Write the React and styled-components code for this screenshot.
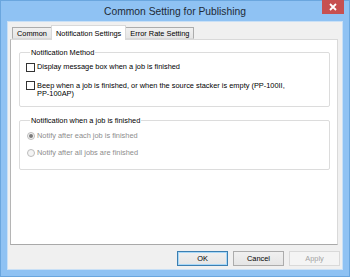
import styled, { createGlobalStyle } from "styled-components";

const Global = createGlobalStyle`
  html, body { margin: 0; padding: 0; }
  body { width: 350px; height: 277px; overflow: hidden; font-family: "Liberation Sans", Arial, sans-serif; }
`;

const Frame = styled.div`
  box-sizing: border-box;
  width: 350px;
  height: 277px;
  background: #8fc2f3;
  border: 1px solid #6aa6de;
  display: flex;
  flex-direction: column;
  padding: 0 6px 6px 6px;
`;

const TitleBar = styled.div`
  position: relative;
  height: 21px;
  display: flex;
  align-items: center;
  justify-content: center;
  font-size: 10.3px;
  color: #1e2a36;
`;

const Close = styled.div`
  position: absolute;
  right: -1px;
  top: -1px;
  width: 22px;
  height: 14px;
  background: #c75050;
  display: flex;
  align-items: center;
  justify-content: center;
`;

const Client = styled.div`
  flex: 1;
  background: #f0f0f0;
  border: 1px solid #c9e0f6;
  display: flex;
  flex-direction: column;
  padding: 3px 2px 3px 2px;
`;

const TabStrip = styled.div`
  display: flex;
  align-items: flex-end;
  height: 14px;
  padding-left: 2px;
  position: relative;
  z-index: 1;
`;

const Tab = styled.div`
  box-sizing: border-box;
  height: ${(p) => (p.$active ? "15px" : "12px")};
  margin-bottom: ${(p) => (p.$active ? "-1px" : "0")};
  margin-left: ${(p) => (p.$active ? "-1px" : "0")};
  margin-right: ${(p) => (p.$active ? "-1px" : "0")};
  padding: ${(p) => (p.$active ? "0 4px" : "0 4px")};
  border: 1px solid ${(p) => (p.$active ? "#d9d9d9" : "#acacac")};
  border-bottom: ${(p) => (p.$active ? "none" : "1px solid #d9d9d9")};
  background: ${(p) => (p.$active ? "#ffffff" : "linear-gradient(#f0f0f0, #e5e5e5)")};
  font-size: 7.4px;
  color: #000;
  display: flex;
  align-items: center;
  position: relative;
  z-index: ${(p) => (p.$active ? 2 : 1)};
`;

const Panel = styled.div`
  box-sizing: border-box;
  height: 206px;
  margin-right: 2px;
  background: #fff;
  border: 1px solid #d9d9d9;
  border-left-color: #b5b5b5;
  border-bottom-color: #a9a9a9;
  padding: 8px 7px 0 8px;
  display: flex;
  flex-direction: column;
  gap: 9px;
`;

const Group = styled.fieldset`
  margin: 0;
  border: 1px solid #dcdcdc;
  border-radius: 2px;
  padding: ${(p) => p.$pad};
  display: flex;
  flex-direction: column;
  gap: ${(p) => p.$gap};
`;

const Legend = styled.legend`
  font-size: 7.4px;
  line-height: 9px;
  padding: 0 1px;
  margin-left: 4px;
  color: #000;
`;

const Option = styled.label`
  display: flex;
  align-items: flex-start;
  gap: 2px;
  font-size: 7.4px;
  line-height: 8px;
  color: ${(p) => (p.$disabled ? "#8d8d8d" : "#000")};
`;

const Check = styled.span`
  flex: none;
  box-sizing: border-box;
  width: 9px;
  height: 9px;
  border: 1px solid #333;
  background: #fff;
  margin-top: -0.5px;
`;

const Radio = styled.span`
  flex: none;
  box-sizing: border-box;
  width: 8px;
  height: 8px;
  border-radius: 50%;
  border: 1px solid #bcbcbc;
  background: #f4f4f4;
  margin-left: 1px;
  display: flex;
  align-items: center;
  justify-content: center;
  &::after {
    content: "";
    width: 4px;
    height: 4px;
    border-radius: 50%;
    background: ${(p) => (p.$on ? "#7a7a7a" : "transparent")};
  }
`;

const Buttons = styled.div`
  display: flex;
  justify-content: flex-end;
  gap: 5px;
  margin-top: 6px;
`;

const Button = styled.div`
  box-sizing: border-box;
  width: 51px;
  height: 15px;
  display: flex;
  align-items: center;
  justify-content: center;
  font-size: 7.4px;
  color: ${(p) => (p.$disabled ? "#a3a3a3" : "#000")};
  background: ${(p) => (p.$disabled ? "#f4f4f4" : "linear-gradient(#f0f0f0, #e5e5e5)")};
  border: 1px solid ${(p) => (p.$default ? "#3c7fb1" : p.$disabled ? "#d9d9d9" : "#acacac")};
  box-shadow: ${(p) => (p.$default ? "inset 0 0 0 1px #a8d8f8" : "none")};
`;

export default function App() {
  return (
    <>
      <Global />
      <Frame>
        <TitleBar>
          Common Setting for Publishing
          <Close>
            <svg width="8" height="8" viewBox="0 0 8 8">
              <path d="M1 1L7 7M7 1L1 7" stroke="#fff" strokeWidth="1.8" />
            </svg>
          </Close>
        </TitleBar>
        <Client>
          <TabStrip>
            <Tab>Common</Tab>
            <Tab $active>Notification Settings</Tab>
            <Tab>Error Rate Setting</Tab>
          </TabStrip>
          <Panel>
            <Group $pad="6px 6px 8px 6px" $gap="10px">
              <Legend>Notification Method</Legend>
              <Option>
                <Check />
                Display message box when a job is finished
              </Option>
              <Option>
                <Check />
                <span>
                  Beep when a job is finished, or when the source stacker is empty (PP-100II,
                  <br />
                  PP-100AP)
                </span>
              </Option>
            </Group>
            <Group $pad="7px 6px 12px 6px" $gap="9px">
              <Legend>Notification when a job is finished</Legend>
              <Option $disabled>
                <Radio $on />
                Notify after each job is finished
              </Option>
              <Option $disabled>
                <Radio />
                Notify after all jobs are finished
              </Option>
            </Group>
          </Panel>
          <Buttons>
            <Button $default>OK</Button>
            <Button>Cancel</Button>
            <Button $disabled>Apply</Button>
          </Buttons>
        </Client>
      </Frame>
    </>
  );
}
